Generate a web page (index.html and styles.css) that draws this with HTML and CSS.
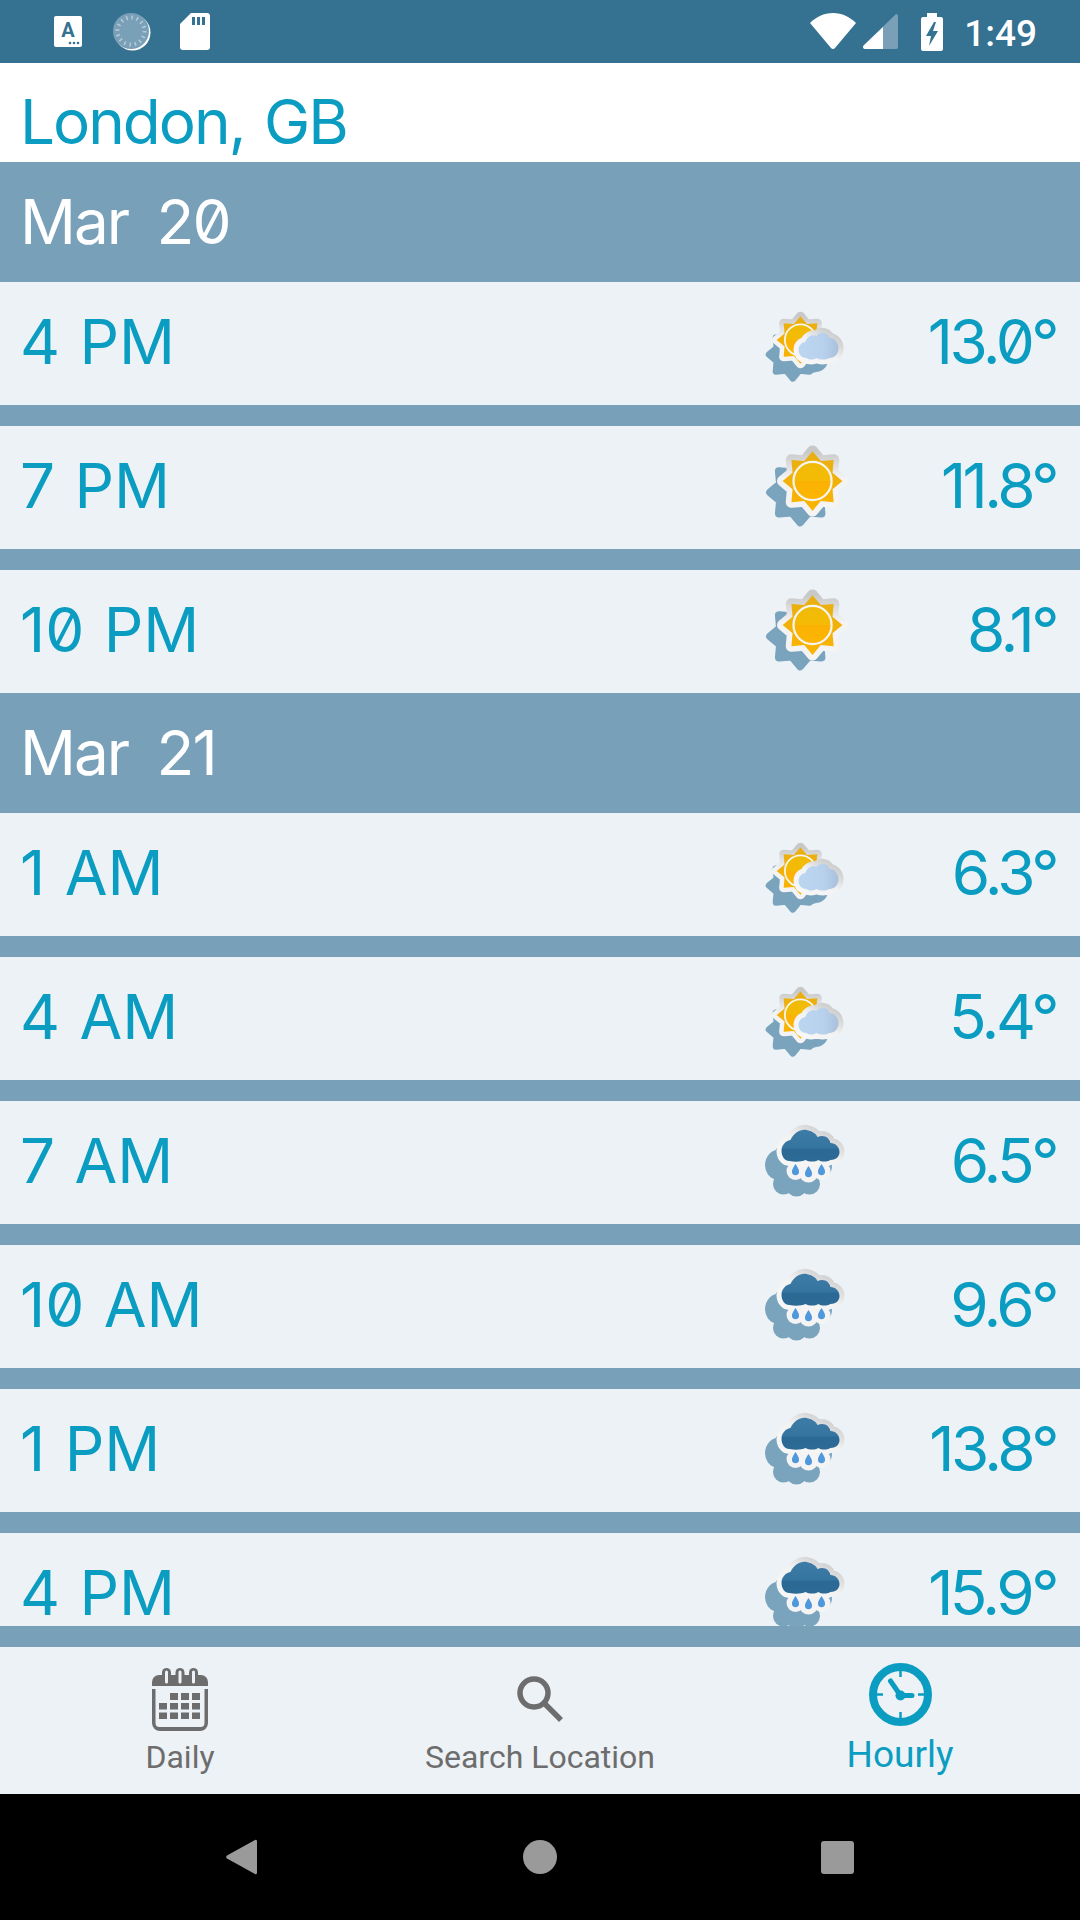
FILE: index.html
```html
<!DOCTYPE html>
<html lang="en">
<head>
<meta charset="utf-8">
<title>London, GB</title>
<link rel="stylesheet" href="styles.css">
</head>
<body>
<svg class="sprite" aria-hidden="true">
  <defs>
    <linearGradient id="stick" x1="0" y1="0" x2="0" y2="1"><stop offset="0" stop-color="#c8c8c8"/><stop offset=".45" stop-color="#f3f3f3"/><stop offset="1" stop-color="#f4f4f4"/></linearGradient>
    <linearGradient id="stick2" x1="0" y1="1" x2="1" y2="0"><stop offset="0" stop-color="#f7f7f7"/><stop offset=".5" stop-color="#f2f2f2"/><stop offset=".8" stop-color="#d6d6d6"/><stop offset="1" stop-color="#c8c8c8"/></linearGradient>
    <linearGradient id="amber" x1="0" y1="0" x2="0" y2="1"><stop offset="0" stop-color="#eebb08"/><stop offset=".5" stop-color="#f5bb05"/><stop offset=".5" stop-color="#fbb104"/><stop offset="1" stop-color="#fdb603"/></linearGradient>
    <linearGradient id="ray" x1="0" y1="0" x2="0" y2="1"><stop offset="0" stop-color="#e8ae12"/><stop offset="1" stop-color="#fbb400"/></linearGradient>
    <linearGradient id="sky" x1="0" y1="0" x2="1" y2="0"><stop offset="0" stop-color="#bcd6f2"/><stop offset=".6" stop-color="#b8d2ee"/><stop offset="1" stop-color="#a9c0dc"/></linearGradient>
    <linearGradient id="navy" x1="0" y1="0" x2="0" y2="1"><stop offset="0" stop-color="#3d7ca6"/><stop offset=".58" stop-color="#35749f"/><stop offset=".6" stop-color="#2b6893"/><stop offset="1" stop-color="#2d6b96"/></linearGradient>
    <polygon id="star" points="68,25 76,34.6 88.5,33.5 87.4,46 97,54 87.4,62 88.5,74.5 76,73.4 68,83 60,73.4 47.5,74.5 48.6,62 39,54 48.6,46 47.5,33.5 60,34.6"/>
    <path id="puff" d="M66 76C60 76 58 71 58 68C58 63 62 60 65 60C66 55 72 52 76 54C79 49 87 50 89 56C94 56 98 61 98 66C98 72 94 76 89 76C84 78 80 78 76 76C72 78 69 78 66 76Z"/>
    <path id="rainc" d="M50 61C45 61 42 56 42 51C42 45 46 41 51 40C54 33 61 29 67 30C72 31 76 33 78 37C85 34 90 38 91 43C96 43 100 47 100 52C100 57 96 60 91 60C87 62 82 62 79 60C75 62 70 62 66 60C62 62 55 62 50 61Z"/>
  </defs>
  <symbol id="i-sun" viewBox="0 0 130 123">
    <g transform="translate(-1.500 -0.600) scale(1.030)">
      <g fill="#7aa3bd" stroke="#7aa3bd" stroke-width="8" stroke-linejoin="round"><use href="#star" x="-12" y="11"/></g>
      <use href="#star" fill="#f1f1f1" stroke="url(#stick)" stroke-width="11" stroke-linejoin="round"/>
      <use href="#star" fill="url(#ray)"/>
      <circle cx="68" cy="54" r="18.5" fill="url(#amber)" stroke="#f6f4ee" stroke-width="2.2"/>
    </g>
  </symbol>
  <symbol id="i-part" viewBox="0 0 130 123">
    <g transform="translate(-3.500 0)">
      <g transform="translate(8 15.2) scale(.82)"><use href="#star" x="-14" y="16" fill="#7aa3bd" stroke="#7aa3bd" stroke-width="8" stroke-linejoin="round"/></g>
      <use href="#puff" x="-14" y="10" fill="#7aa3bd" stroke="#7aa3bd" stroke-width="8" stroke-linejoin="round"/>
      <g transform="translate(4.2 13.7) scale(.82)">
        <use href="#star" fill="#f1f1f1" stroke="url(#stick)" stroke-width="11" stroke-linejoin="round"/>
        <use href="#star" fill="url(#ray)"/>
        <circle cx="68" cy="54" r="19" fill="url(#amber)" stroke="#f6f4ee" stroke-width="2.2"/>
      </g>
      <use href="#puff" fill="#efefef" stroke="url(#stick2)" stroke-width="10" stroke-linejoin="round"/>
      <use href="#puff" fill="url(#sky)"/>
    </g>
  </symbol>
  <symbol id="i-rain" viewBox="0 0 130 123">
    <g transform="translate(-4.500 -1)">
      <g fill="#7aa3bd" stroke="#7aa3bd" stroke-width="9" stroke-linejoin="round" transform="translate(-12 14)">
        <use href="#rainc"/><circle cx="56" cy="70" r="6"/><circle cx="69" cy="72" r="6"/><circle cx="82" cy="70" r="6"/>
      </g>
      <use href="#rainc" fill="#f2f2f2" stroke="url(#stick2)" stroke-width="10" stroke-linejoin="round"/>
      <circle cx="56" cy="71" r="9" fill="#f4f4f4"/><circle cx="69" cy="73" r="9.5" fill="#f4f4f4"/><circle cx="82" cy="71" r="9" fill="#f4f4f4"/>
      <use href="#rainc" fill="url(#navy)"/>
      <path d="M56 64C58 67 60 70 59.5 72.500A3.600 3.600 0 0 1 52.500 72.500C52 70 54 67 56 64ZM69 66C71 69 73 72 72.500 74.500A3.600 3.600 0 0 1 65.500 74.500C65 72 67 69 69 66ZM82 64C84 67 86 70 85.500 72.500A3.600 3.600 0 0 1 78.500 72.500C78 70 80 67 82 64Z" fill="#5098dc"/>
    </g>
  </symbol>
</svg>

<div class="status">
  <div class="status-left">
    <svg class="si-a" viewBox="0 0 28 31"><rect width="28" height="31" rx="2" fill="#fff"/><text x="14" y="21" text-anchor="middle" class="si-a-text">A</text><circle cx="16" cy="27" r="1.300" fill="#357190"/><circle cx="20" cy="27" r="1.300" fill="#357190"/><circle cx="24" cy="27" r="1.300" fill="#357190"/></svg>
    <svg class="si-spin" viewBox="0 0 38 38">
      <circle cx="19.500" cy="19.500" r="18" fill="#fff"/>
      <circle cx="18" cy="18" r="18" fill="#7aa0b8"/>
      <circle cx="18" cy="18" r="13.500" fill="none" stroke="#b6cbd8" stroke-width="4" stroke-dasharray="1.500 3.800"/>
    </svg>
    <svg class="si-sd" viewBox="0 0 30 37"><path d="M11 0H27a3 3 0 0 1 3 3V34a3 3 0 0 1-3 3H3a3 3 0 0 1-3-3V11Z" fill="#fff"/><path d="M12 4h3v8h-3zM17 4h3v8h-3zM22 4h3v8h-3z" fill="#357190"/></svg>
  </div>
  <div class="status-right">
    <svg class="si-wifi" viewBox="0 0 46 37"><path d="M0 10C6 4 14 0 23 0S40 4 46 10L25 35a2.600 2.600 0 0 1-4 0Z" fill="#fff"/></svg>
    <svg class="si-signal" viewBox="0 0 35 35"><path d="M33 0a2 2 0 0 1 2 2V33a2 2 0 0 1-2 2H2a2 2 0 0 1-1.400-3.400Z" fill="#7aa0b8"/><path d="M20 13V35H2a2 2 0 0 1-1.400-3.400Z" fill="#fff"/></svg>
    <svg class="si-batt" viewBox="0 0 22 38"><path d="M6 0h10v4h4a2 2 0 0 1 2 2V36a2 2 0 0 1-2 2H2a2 2 0 0 1-2-2V6a2 2 0 0 1 2-2h4Z" fill="#fff"/><path d="M13 9 5 23h5l-2 10 9-15h-5l3-9Z" fill="#357190"/></svg>
    <span class="clock">1:49</span>
  </div>
</div>

<header class="place">London, GB</header>

<main class="list">
  <h2 class="day">Mar 20</h2>
  <div class="row"><span class="time">4 PM</span><svg class="wx"><use href="#i-part"/></svg><span class="temp">13.0°</span></div>
  <div class="gap"></div>
  <div class="row"><span class="time">7 PM</span><svg class="wx"><use href="#i-sun"/></svg><span class="temp">11.8°</span></div>
  <div class="gap"></div>
  <div class="row"><span class="time">10 PM</span><svg class="wx"><use href="#i-sun"/></svg><span class="temp">8.1°</span></div>
  <h2 class="day">Mar 21</h2>
  <div class="row"><span class="time">1 AM</span><svg class="wx"><use href="#i-part"/></svg><span class="temp">6.3°</span></div>
  <div class="gap"></div>
  <div class="row"><span class="time">4 AM</span><svg class="wx"><use href="#i-part"/></svg><span class="temp">5.4°</span></div>
  <div class="gap"></div>
  <div class="row"><span class="time">7 AM</span><svg class="wx"><use href="#i-rain"/></svg><span class="temp">6.5°</span></div>
  <div class="gap"></div>
  <div class="row"><span class="time">10 AM</span><svg class="wx"><use href="#i-rain"/></svg><span class="temp">9.6°</span></div>
  <div class="gap"></div>
  <div class="row"><span class="time">1 PM</span><svg class="wx"><use href="#i-rain"/></svg><span class="temp">13.8°</span></div>
  <div class="gap"></div>
  <div class="row row-cut"><span class="time">4 PM</span><svg class="wx"><use href="#i-rain"/></svg><span class="temp">15.9°</span></div>
</main>

<div class="foot-gap"></div>

<nav class="tabs">
  <div class="tab">
    <svg class="ti-cal" viewBox="0 0 56 63" fill="#6d6d6d">
      <path d="M0 14a7 7 0 0 1 7-7H49a7 7 0 0 1 7 7v4H0Z"/>
      <rect x="10" y="0" width="9" height="18" rx="4.500"/><rect x="23.500" y="0" width="9" height="18" rx="4.500"/><rect x="37" y="0" width="9" height="18" rx="4.500"/>
      <path d="M14.500 4v10M28 4v10M41.500 4v10" stroke="#edf2f6" stroke-width="3" stroke-linecap="round"/>
      <path d="M0 21h3.500V55a4 4 0 0 0 4 4H48.500a4 4 0 0 0 4-4V21H56V55a8 8 0 0 1-8 8H8a8 8 0 0 1-8-8Z"/>
      <path d="M18 25h8v7h-8zM29 25h8v7h-8zM40 25h8v7h-8zM7 35h8v6.500H7zM18 35h8v6.500h-8zM29 35h8v6.500h-8zM40 35h8v6.500h-8zM7 44.500h8v6.500H7zM18 44.500h8v6.500h-8zM29 44.500h8v6.500h-8zM40 44.500h8v6.500h-8z"/>
    </svg>
    <span class="tab-label">Daily</span>
  </div>
  <div class="tab">
    <svg class="ti-search" viewBox="0 0 46 46" fill="none" stroke="#6d6d6d"><circle cx="17" cy="17" r="14" stroke-width="5.500"/><path d="M27 27 44 44" stroke-width="5.500"/></svg>
    <span class="tab-label">Search Location</span>
  </div>
  <div class="tab tab-on">
    <svg class="ti-clock" viewBox="0 0 63 63"><circle cx="31.500" cy="31.500" r="27.500" fill="none" stroke="#0a9dc1" stroke-width="8"/><path d="M31.500 8v6M31.500 49v6M8 31.500h6M49 31.500h6" stroke="#0a9dc1" stroke-width="2.500"/><path d="M21.500 18 31.500 32.500H43" fill="none" stroke="#0a9dc1" stroke-width="5" stroke-linecap="round" stroke-linejoin="round"/><circle cx="31.500" cy="32.500" r="5" fill="#0a9dc1"/></svg>
    <span class="tab-label">Hourly</span>
  </div>
</nav>

<div class="sysnav">
  <svg class="sn-back" viewBox="0 0 31 36"><path d="M29 1a1.500 1.500 0 0 1 2 1V34a1.500 1.500 0 0 1-2 1L1 19.500a2 2 0 0 1 0-3Z" fill="#9a9a9a"/></svg>
  <span class="sn-home"></span>
  <span class="sn-recent"></span>
</div>
</body>
</html>
```
FILE: styles.css
```css
* { box-sizing: border-box; }
html, body { margin: 0; padding: 0; }
body {
  width: 1080px;
  height: 1920px;
  display: flex;
  flex-direction: column;
  overflow: hidden;
  background: #edf2f6;
  font-family: Inter, Roboto, sans-serif;
}
.sprite { position: absolute; width: 0; height: 0; }

.status {
  height: 63px;
  flex: none;
  background: #357190;
  display: flex;
  align-items: center;
  justify-content: space-between;
  padding: 0 43px 0 54px;
}
.status-left, .status-right { display: flex; align-items: center; }
.si-a { width: 28px; height: 31px; margin-right: 31px; }
.si-a-text { font: 700 20px Roboto, sans-serif; fill: #357190; }
.si-spin { width: 38px; height: 38px; margin-right: 29px; }
.si-sd { width: 30px; height: 37px; }
.si-wifi { width: 46px; height: 37px; margin-right: 7px; }
.si-signal { width: 35px; height: 35px; margin-right: 23px; }
.si-batt { width: 22px; height: 38px; margin-right: 21px; }
.clock { font: 500 37px/1 Roboto, sans-serif; color: #fff; padding-top: 4px; }

.place {
  height: 99px;
  flex: none;
  background: #fff;
  color: #0a9dc1;
  font-size: 62px;
  font-weight: 400;
  line-height: 62px;
  padding: 28px 0 0 20px;
  letter-spacing: -2px;
  word-spacing: 4px;
}

.list { height: 1464px; flex: none; }
.day {
  height: 120px;
  margin: 0;
  background: #78a0b9;
  color: #fff;
  font-size: 62px;
  font-weight: 400;
  line-height: 120px;
  padding-left: 20px;
  font-feature-settings: "zero";
  letter-spacing: -2px;
  word-spacing: 13px;
}
.row {
  height: 123px;
  display: flex;
  align-items: center;
  padding: 0 24px 0 20px;
  color: #0a9dc1;
  font-size: 62px;
  line-height: 62px;
  font-feature-settings: "zero";
}
.time { flex: 1; margin-bottom: 4px; word-spacing: 2px; }
.wx { width: 130px; height: 123px; flex: none; }
.temp { width: 182px; text-align: right; letter-spacing: -3.500px; margin-bottom: 4px; }
.gap { height: 21px; background: #78a0b9; }
.foot-gap { height: 21px; flex: none; background: #78a0b9; }

.row-cut { height: 93px; align-items: flex-start; }
.row-cut .time, .row-cut .temp { margin: 29px 0 0; }
.row-cut .wx { clip-path: inset(0 0 30px 0); }

.tabs {
  height: 147px;
  flex: none;
  display: grid;
  grid-template-columns: repeat(3, 360px);
}
.tab {
  position: relative;
  display: flex;
  flex-direction: column;
  align-items: center;
  color: #6d6d6d;
  font-family: Roboto, sans-serif;
  font-size: 32px;
  padding-top: 21px;
}
.tab-label { line-height: 36px; position: absolute; top: 92px; }
.tab-on { color: #0a9dc1; font-size: 37px; padding-top: 16px; }
.tab-on .tab-label { top: 88px; line-height: 40px; }
.ti-cal { width: 56px; height: 63px; }
.ti-search { width: 46px; height: 46px; margin-top: 8px; }
.ti-clock { width: 63px; height: 63px; }

.sysnav {
  height: 126px;
  flex: none;
  background: #000;
  display: grid;
  grid-template-columns: repeat(3, 1fr);
  align-items: center;
  justify-items: center;
}
.sn-back { width: 31px; height: 36px; margin-left: 123px; }
.sn-home { width: 34px; height: 34px; border-radius: 50%; background: #9a9a9a; }
.sn-recent { width: 33px; height: 33px; border-radius: 3px; background: #9a9a9a; margin-right: 125px; }
```
